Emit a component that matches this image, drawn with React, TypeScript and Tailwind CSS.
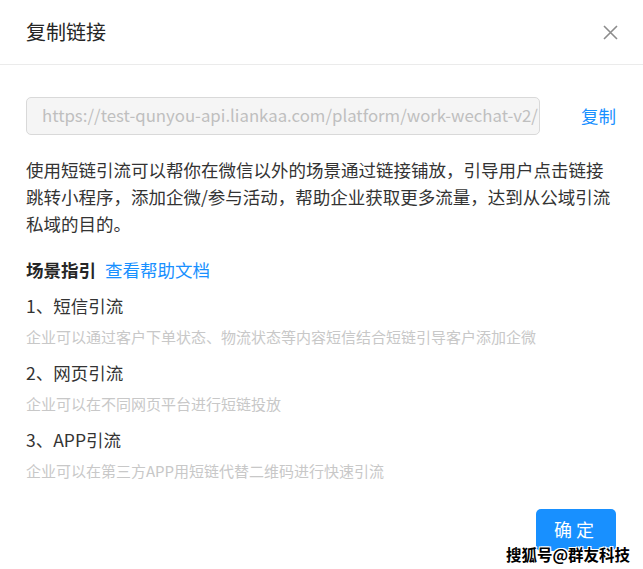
const scenes = [
  { title: '1、短信引流', desc: '企业可以通过客户下单状态、物流状态等内容短信结合短链引导客户添加企微' },
  { title: '2、网页引流', desc: '企业可以在不同网页平台进行短链投放' },
  { title: '3、APP引流', desc: '企业可以在第三方APP用短链代替二维码进行快速引流' },
];

const font = "font-['Microsoft_YaHei','Noto_Sans_CJK_SC',sans-serif]";

export default function App() {
  return (
    <div className={`relative h-[569px] w-[643px] overflow-hidden bg-white ${font}`}>
      {/* header */}
      <div className="flex h-[65px] items-center justify-between border-b border-[#ebebeb] pl-[26px] pr-[25px]">
        <div className="text-[20px] leading-none text-[#262626]">复制链接</div>
        <button className="flex h-[16px] w-[16px] items-center justify-center">
          <svg width="15" height="15" viewBox="0 0 15 15">
            <path d="M1 1 L14 14 M14 1 L1 14" stroke="#8c8c8c" strokeWidth="1.6" fill="none" />
          </svg>
        </button>
      </div>

      {/* body */}
      <div className="px-[26px] pt-[32px]">
        <div className="flex items-center">
          <div className="flex h-[38px] w-[514px] items-center overflow-hidden whitespace-nowrap rounded-[5px] border border-[#d9d9d9] bg-[#f5f5f5] pl-[15px] text-[16.8px] text-[#bfbfbf]">
            https://test-qunyou-api.liankaa.com/platform/work-wechat-v2/
          </div>
          <span className="ml-auto pr-px text-[17.5px] text-[#1890ff]">复制</span>
        </div>

        <p className="mt-[21px] text-[17.5px] leading-[27px] text-[#333]">
          使用短链引流可以帮你在微信以外的场景通过链接铺放，引导用户点击链接跳转小程序，添加企微/参与活动，帮助企业获取更多流量，达到从公域引流私域的目的。
        </p>

        <div className="mt-[19px] flex items-center text-[17.5px] leading-[27px]">
          <span className="font-bold text-[#262626]">场景指引</span>
          <span className="ml-[9px] text-[#1890ff]">查看帮助文档</span>
        </div>

        <div className="mt-[9px] flex flex-col gap-[11.5px]">
          {scenes.map((s) => (
            <div key={s.title}>
              <div className="text-[17.5px] leading-[27px] text-[#333]">{s.title}</div>
              <div className="mt-[6.5px] text-[15px] leading-[22px] text-[#c8c8c8]">{s.desc}</div>
            </div>
          ))}
        </div>

        <div className="mt-[27px] flex justify-end pr-px">
          <button className="h-[42px] w-[80px] rounded-[5px] bg-[#1890ff] text-[18px] tracking-[4px] text-white">
            确定
          </button>
        </div>
      </div>

      {/* watermark */}
      <div className="absolute bottom-[7px] right-[13px] text-[15.5px] font-bold leading-none text-black [text-shadow:1px_1px_0_#fff,-1px_-1px_0_#fff,1px_-1px_0_#fff,-1px_1px_0_#fff]">
        搜狐号@群友科技
      </div>
    </div>
  );
}
